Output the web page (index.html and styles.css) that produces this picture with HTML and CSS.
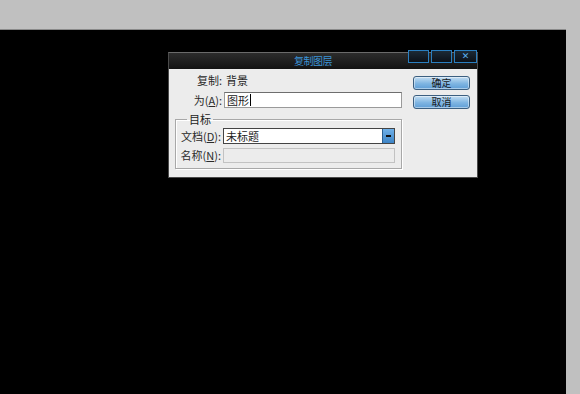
FILE: index.html
```html
<!DOCTYPE html>
<html lang="zh-CN">

<head>
    <meta charset="UTF-8">
    <title>复制图层</title>
    <link rel="stylesheet" href="styles.css">
</head>

<body>
    <div class="topbar"></div>
    <div class="workspace">
        <div class="canvas">
            <div class="dialog">
                <div class="titlebar">
                    <span class="title">复制图层</span>
                    <div class="winbtns">
                        <span class="winbtn"></span>
                        <span class="winbtn"></span>
                        <span class="winbtn close">✕</span>
                    </div>
                </div>
                <div class="dlg-body">
                    <div class="fields">
                        <div class="row row-text">
                            <span class="label">复制:</span>
                            <span class="value">背景</span>
                        </div>
                        <div class="row row-input">
                            <span class="label">为(<u>A</u>):</span>
                            <div class="input">图形<span class="caret"></span></div>
                        </div>
                        <fieldset class="group">
                            <legend>目标</legend>
                            <div class="row row-select">
                                <span class="label">文档(<u>D</u>):</span>
                                <div class="select">
                                    <span class="select-text">未标题</span>
                                    <span class="arrow"></span>
                                </div>
                            </div>
                            <div class="row row-name">
                                <span class="label">名称(<u>N</u>):</span>
                                <div class="input disabled"></div>
                            </div>
                        </fieldset>
                    </div>
                    <div class="buttons">
                        <button class="btn">确定</button>
                        <button class="btn">取消</button>
                    </div>
                </div>
            </div>
        </div>
    </div>
</body>

</html>
```

FILE: styles.css
```css
html,
body {
    margin: 0;
    padding: 0;
}

body {
    width: 580px;
    height: 394px;
    overflow: hidden;
    background-color: #c0c0c0;
    font: normal 11px/13px "Noto Sans CJK SC", "DejaVu Sans", sans-serif;
    color: #222;
}

.topbar {
    height: 29px;
}

.workspace {
    display: flex;
}

.canvas {
    width: 566px;
    height: 365px;
    background-color: #000;
    border-top: 1px solid #8a8a8a;
    box-sizing: border-box;
    padding: 22px 0 0 168px;
}

.dialog {
    width: 308px;
    border: 1px solid #4a4a4a;
    border-top-color: #6a6a6a;
    background-color: #ececec;
}

.titlebar {
    height: 16px;
    background: linear-gradient(#2c2c2c, #121212);
    position: relative;
    text-align: center;
    padding-right: 20px;
}

.title {
    font-size: 10px;
    line-height: 16px;
    color: #3b93d6;
    letter-spacing: -0.5px;
}

.winbtns {
    position: absolute;
    right: 0;
    top: -3px;
    display: flex;
    gap: 2px;
}

.winbtn {
    width: 19px;
    height: 11px;
    border: 1px solid #2a7fc0;
    background: linear-gradient(#1c2a36, #0c1118);
    color: #5bb0ee;
    font: bold 9px/11px "DejaVu Sans", sans-serif;
    text-align: center;
}

.winbtn.close {
    width: 21px;
}

.dlg-body {
    display: flex;
    padding: 5px 7px 8px 6px;
    gap: 11px;
}

.fields {
    width: 227px;
    display: flex;
    flex-direction: column;
}

.row {
    display: flex;
    align-items: center;
}

.label {
    width: 47px;
    text-align: right;
    flex-shrink: 0;
    margin-right: 2px;
    color: #2a2a2a;
}

.row-text {
    height: 13px;
}

.row-text .value {
    margin-left: 2px;
}

.row-input {
    margin-top: 5px;
    height: 16px;
}

.input {
    flex: 1;
    height: 16px;
    box-sizing: border-box;
    background-color: #fff;
    border: 1px solid #9a9a9a;
    border-top-color: #6e6e6e;
    padding-left: 2px;
    line-height: 14px;
    display: flex;
    align-items: center;
}

.caret {
    width: 1px;
    height: 12px;
    background-color: #000;
    margin-left: 1px;
}

.input.disabled {
    background-color: #ececec;
    border-color: #c2c2c2;
    margin-right: 6px;
    height: 15px;
}

.group {
    margin: 5px 0 0 0;
    padding: 3px 0 5px 0;
    border: 1px solid #a8a8a8;
    box-shadow: inset 1px 1px 0 #fff, 1px 1px 0 #fff;
    min-width: 0;
}

.group legend {
    padding: 0 2px;
    margin-left: 11px;
    line-height: 12px;
}

.row-select {
    height: 16px;
}

.row-select .label,
.row-name .label {
    width: 45px;
}

.select {
    flex: 1;
    margin-right: 6px;
    height: 16px;
    box-sizing: border-box;
    background-color: #fff;
    border: 1px solid #444;
    display: flex;
    align-items: stretch;
}

.select-text {
    flex: 1;
    padding-left: 2px;
    line-height: 14px;
}

.arrow {
    width: 11px;
    background: linear-gradient(#6fb0e8, #3d84c6);
    border-left: 1px solid #2b5f90;
    position: relative;
}

.arrow::after {
    content: "";
    position: absolute;
    left: 3px;
    top: 6px;
    width: 5px;
    height: 2px;
    background-color: #111;
}

.row-name {
    margin-top: 4px;
    height: 15px;
}

.buttons {
    display: flex;
    flex-direction: column;
    gap: 5px;
    padding-top: 2px;
}

.btn {
    width: 57px;
    height: 14px;
    padding: 0;
    border: 1px solid #3c5f80;
    border-radius: 3px;
    background: linear-gradient(#c4def2, #7fb5e2 55%, #5f9ed6);
    box-shadow: inset 0 0 0 1px rgba(255, 255, 255, 0.45);
    font: normal 10px/12px "Noto Sans CJK SC", sans-serif;
    color: #1a1a1a;
}
```
